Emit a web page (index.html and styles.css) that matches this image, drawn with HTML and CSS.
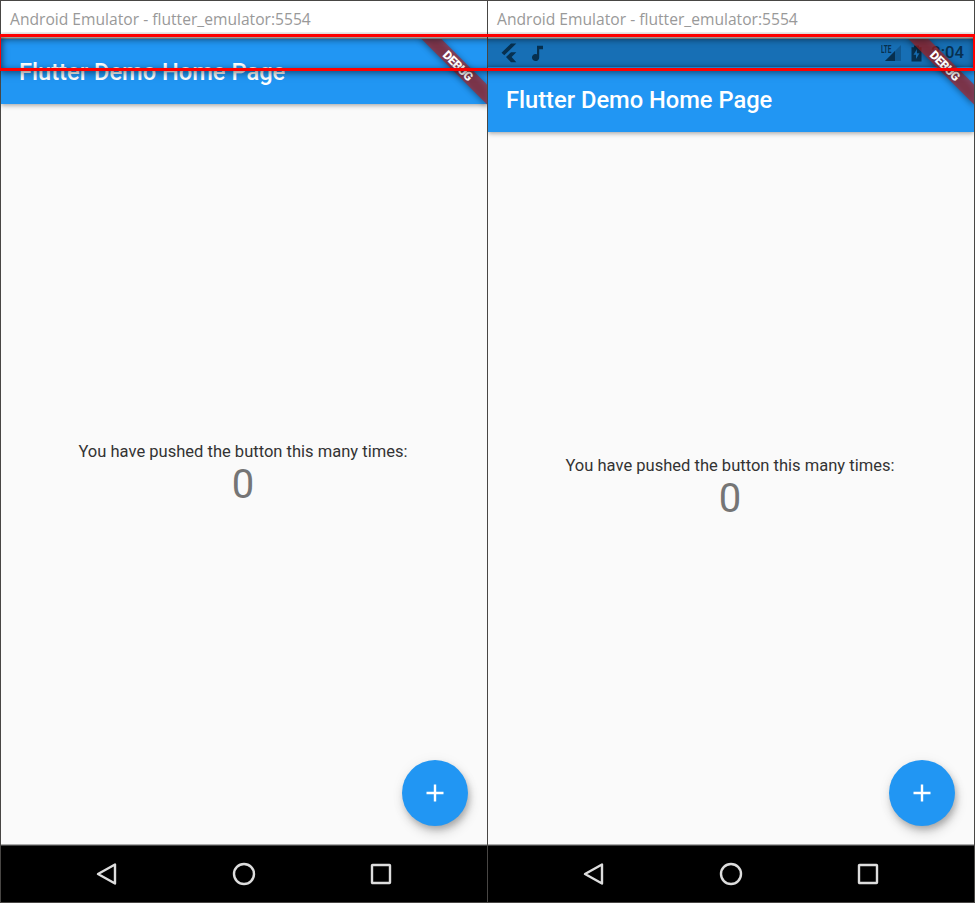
FILE: index.html
```html
<!DOCTYPE html>
<html lang="en">
<head>
<meta charset="utf-8">
<title>Android Emulator</title>
<link rel="stylesheet" href="styles.css">
</head>
<body>
<svg width="0" height="0" class="defs">
  <symbol id="back" viewBox="0 0 24 24"><path class="line" d="M20 2.500V21.500L3 12Z"/></symbol>
  <symbol id="home" viewBox="0 0 24 24"><circle class="line" cx="12" cy="12" r="10"/></symbol>
  <symbol id="recent" viewBox="0 0 24 24"><rect class="line" x="3" y="3" width="18" height="18" rx=".5"/></symbol>
  <symbol id="plus" viewBox="0 0 20 20"><path d="M8.800 1.500h2.400V8.800h7.300v2.400H11.200v7.300H8.800V11.200H1.500V8.800H8.800Z"/></symbol>
</svg>
<main class="desktop">
  <section class="window">
    <header class="titlebar"><span>Android Emulator - flutter_emulator:5554</span></header>
    <div class="screen">
      <div class="appbar"><h1>Flutter Demo Home Page</h1></div>
      <div class="content">
        <p class="message">You have pushed the button this many times:</p>
        <p class="count">0</p>
      </div>
      <button class="fab"><svg width="20" height="20"><use href="#plus"/></svg></button>
      <svg class="debug" width="90" height="90" viewBox="0 0 90 90">
        <path class="band-shadow" d="M22 -1H42L91 48V68Z"/>
        <path class="band" d="M22.500 0H42.500L90 47.500V67.500Z" transform="translate(0 -2)"/>
        <text class="band-text" transform="translate(61.200 26.800) rotate(45)" x="0" y="4.300" text-anchor="middle" textLength="37">DEBUG</text>
      </svg>
    </div>
    <nav class="navbar">
      <svg width="24" height="24"><use href="#back"/></svg>
      <svg width="24" height="24"><use href="#home"/></svg>
      <svg width="24" height="24"><use href="#recent"/></svg>
    </nav>
  </section>
  <section class="window">
    <header class="titlebar"><span>Android Emulator - flutter_emulator:5554</span></header>
    <div class="screen">
      <div class="statusbar">
        <svg width="16" height="20" viewBox="0 0 16 20"><path d="M10 .5h5.300L3.300 12.300.5 9.700ZM10 9.200h5.300L10.600 14l4.700 5.200H10L5 14Z"/></svg>
        <svg class="note" width="12" height="17" viewBox="0 0 12 17"><path d="M5 .7h6v3.600H7.200v8.200A3.600 3.600 0 1 1 5 9.200Z"/></svg>
        <span class="spacer"></span>
        <svg class="signal" width="21" height="18" viewBox="0 0 21 18"><text class="lte" x="0" y="8.500" textLength="10.500" lengthAdjust="spacingAndGlyphs">LTE</text><path class="dim" d="M20 1V17H4Z"/><path d="M14 7V17H4Z"/></svg>
        <svg class="battery" width="11" height="17" viewBox="0 0 11 17"><path fill-rule="evenodd" d="M3 .5H8V2.300H10.500V16.500H.5V2.300H3ZM6 4 2.500 9.800H5V14L8.500 8.300H6Z"/></svg>
        <span class="clock">2:04</span>
      </div>
      <div class="appbar"><h1>Flutter Demo Home Page</h1></div>
      <div class="content">
        <p class="message">You have pushed the button this many times:</p>
        <p class="count">0</p>
      </div>
      <button class="fab"><svg width="20" height="20"><use href="#plus"/></svg></button>
      <svg class="debug" width="90" height="90" viewBox="0 0 90 90">
        <path class="band-shadow" d="M22 -1H42L91 48V68Z"/>
        <path class="band" d="M22.500 0H42.500L90 47.500V67.500Z" transform="translate(0 -2)"/>
        <text class="band-text" transform="translate(61.200 26.800) rotate(45)" x="0" y="4.300" text-anchor="middle" textLength="37">DEBUG</text>
      </svg>
    </div>
    <nav class="navbar">
      <svg width="24" height="24"><use href="#back"/></svg>
      <svg width="24" height="24"><use href="#home"/></svg>
      <svg width="24" height="24"><use href="#recent"/></svg>
    </nav>
  </section>
  <div class="highlight"></div>
</main>
</body>
</html>
```
FILE: styles.css
```css
* { box-sizing: border-box; }
body { margin: 0; font-family: Roboto, sans-serif; overflow: hidden; }
.defs { position: absolute; }
.desktop {
  position: relative;
  display: grid;
  grid-template-columns: 486px 486px;
  column-gap: 1px;
  width: 975px;
  height: 903px;
  padding: 1px;
  background: #484644;
  overflow: hidden;
}
.window { display: flex; flex-direction: column; height: 901px; }
.titlebar {
  flex: 0 0 37px;
  background: #fff;
  border-bottom: 1px solid #aaa;
  padding-left: 9px;
  color: #999;
  font: 15.63px/37px "Open Sans", sans-serif;
  white-space: nowrap;
}
.titlebar span { display: inline-block; }
.screen {
  position: relative;
  flex: 1;
  display: flex;
  flex-direction: column;
  background: #fafafa;
  border-bottom: 1px solid #aaa;
  overflow: hidden;
}
.statusbar {
  flex: 0 0 28px;
  display: flex;
  align-items: center;
  padding: 0 10px 0 13px;
  background: #176fb5;
  color: #07304f;
  fill: #07304f;
}
.note { margin-left: 15px; }
.spacer { flex: 1; }
.signal { margin-right: 9px; }
.dim { opacity: .35; }
.lte { font: bold 10px Roboto, sans-serif; }
.clock { margin-left: 9px; font-size: 16.7px; font-weight: 500; line-height: 28px; }
.appbar {
  flex: 0 0 65px;
  display: flex;
  align-items: center;
  padding-left: 18px;
  background: #2196f3;
  color: #fff;
  box-shadow: 0 1px 5px rgba(0, 0, 0, .4);
}
h1 { margin: 0; font-size: 23.68px; line-height: 28px; font-weight: 500; white-space: nowrap; }
.content {
  flex: 1;
  display: flex;
  flex-direction: column;
  align-items: center;
  justify-content: center;
  padding: 2px 2px 0 0;
}
.message { margin: 0; color: #333; font-size: 16.55px; line-height: 19px; white-space: nowrap; }
.count { margin: 0; color: #757575; font-size: 40px; line-height: 48px; }
.fab {
  position: absolute;
  right: 19.5px;
  bottom: 18px;
  width: 66px;
  height: 66px;
  padding: 0;
  border: 0;
  border-radius: 50%;
  display: flex;
  align-items: center;
  justify-content: center;
  background: #2196f3;
  fill: #fff;
  box-shadow: 2px 4px 6px -1px rgba(0, 0, 0, .22), 2px 7px 12px rgba(0, 0, 0, .14), 0 1px 14px rgba(0, 0, 0, .05);
}
.debug { position: absolute; top: 0; right: 0; }
.band-shadow { filter: blur(3px); opacity: .4; }
.band { fill: #b71c1c; fill-opacity: .627; }
.band-text { fill: #fff; font: 900 12.2px Roboto, sans-serif; }
.navbar {
  flex: 0 0 57px;
  display: flex;
  align-items: center;
  justify-content: center;
  gap: 113px;
  padding: 0 1px 1px 0;
  background: #000;
  border-top: 1px solid #444;
}
.line { fill: none; stroke: #ddd; stroke-width: 2.400; stroke-linejoin: round; }
.highlight {
  position: absolute;
  inset: 34px 0 auto -1px;
  height: 37px;
  border: 3px solid #f00;
  border-left-width: 2px;
  border-right-width: 2px;
  box-shadow: inset 1px 2px 7px rgba(0, 0, 0, .6), 1px 2px 7px rgba(0, 0, 0, .5);
  clip-path: inset(-2px 0 -16px 0);
}
```
